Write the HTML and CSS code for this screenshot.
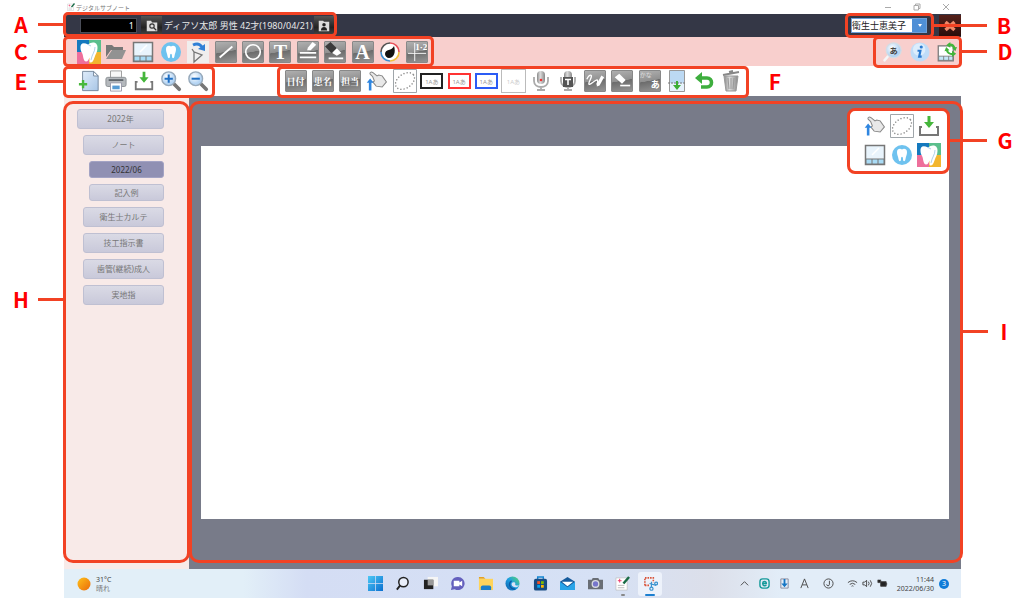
FILE: index.html
```
<!DOCTYPE html>
<html lang="ja">
<head>
    <meta charset="UTF-8">
    <meta name="viewport" content="width=device-width, initial-scale=1.0">
    <title>デジタルサブノート</title>
    <link rel="stylesheet" href="styles.css">
</head>
<body>
    <!-- アイコン定義 -->
    <svg class="defs" width="0" height="0" aria-hidden="true">
        <defs>
            <linearGradient id="gPaper" x1="0" y1="0" x2="1" y2="1"><stop offset="0" stop-color="#dfecfa"/><stop offset="1" stop-color="#a9c6e6"/></linearGradient>
            <linearGradient id="gGrey" x1="0" y1="0" x2="1" y2="0"><stop offset="0" stop-color="#888"/><stop offset=".4" stop-color="#ddd"/><stop offset="1" stop-color="#888"/></linearGradient>
            <linearGradient id="gWin" x1="0" y1="0" x2="1" y2="1"><stop offset="0" stop-color="#4cc8f5"/><stop offset="1" stop-color="#0a6fd0"/></linearGradient>
            <linearGradient id="gEdge" x1="0" y1="1" x2="1" y2="0"><stop offset="0" stop-color="#0c59a4"/><stop offset=".5" stop-color="#1b9de2"/><stop offset="1" stop-color="#5fd96b"/></linearGradient>
            <radialGradient id="gLens" cx=".4" cy=".35"><stop offset="0" stop-color="#fff"/><stop offset="1" stop-color="#b4d4f3"/></radialGradient>
            <linearGradient id="gSun" x1="0" y1="0" x2="1" y2="1"><stop offset="0" stop-color="#ffc21a"/><stop offset="1" stop-color="#ea6a0a"/></linearGradient>
        </defs>
        <symbol id="tooth4" viewBox="0 0 24 24">
            <path fill="#1479be" d="M0 0h12v12H0z"/><path fill="#5bbf8c" d="M12 0h12v12H12z"/><path fill="#ee6f9b" d="M0 12h12v12H0z"/><path fill="#f2b62f" d="M12 12h12v12H12z"/>
            <path fill="#fff" d="M3.500 8c-.5-5 3-6 7.500-3.500C15 1 21 2 20.500 8c0 4-2 6-3 9.500-1 3-2 5-4 5-1.500 0-1-2-1-5-1 2-1.500 4-3.500 4-2.500 0-2.500-4-3.500-7.500C4.500 11.500 3.500 11 3.500 8z"/>
            <path fill="none" stroke="#9bc4e2" stroke-width=".8" d="M11 4.500l3 1.500M18 7c0 5-3 7-4 13"/>
        </symbol>
        <symbol id="folder" viewBox="0 0 24 24">
            <path fill="#777" d="M2 5h6l2 2h9v3H7l-5 7z"/><path fill="#929292" d="M8 10h14l-4 9H2z"/>
        </symbol>
        <symbol id="layout" viewBox="0 0 24 24">
            <path fill="#e9f4fc" stroke="#777" stroke-width="1.500" d="M2.500 2.500h19v19h-19z"/>
            <path fill="#a9dbf5" stroke="#777" d="M3 16h18v5H3z"/><path stroke="#777" d="M9 16v5M15 16v5"/>
            <path stroke="#fff" stroke-width="1.500" d="M9 12l7-7"/>
        </symbol>
        <symbol id="toothRound" viewBox="0 0 24 24">
            <circle cx="12" cy="12" r="10" fill="#6ec2ef"/>
            <path fill="#fff" d="M7 9c0-3 3-4 5-2.500C14 5 17 6 17 9c0 3-1 4-1.500 7-.4 3-2.500 3-2.500 0 0-3-2-3-2 0 0 3-2 3-2.500 0C8 13 7 12 7 9z"/>
        </symbol>
        <symbol id="rotate" viewBox="0 0 24 24">
            <path fill="#f0eeee" d="M1 1h22v22H1z"/>
            <path fill="none" stroke="#777" stroke-width="1.300" d="M8 12v10l8-7zM8 12l-2-3"/>
            <path fill="none" stroke="#2f7fd6" stroke-width="3" d="M7 5c4-2 7-1 9 2"/><path fill="#2f7fd6" d="M12 9l7-5v7z"/>
        </symbol>
        <symbol id="line" viewBox="0 0 22 22"><path stroke="#fff" stroke-width="2" d="M4 17L18 5"/></symbol>
        <symbol id="circle" viewBox="0 0 22 22"><circle cx="11" cy="11" r="8" fill="none" stroke="#fff" stroke-width="1.800"/></symbol>
        <symbol id="pencilLines" viewBox="0 0 22 22">
            <path stroke="#fff" stroke-width="2" d="M2 12h18M2 17h18"/><path fill="#fff" d="M10 9l1-3 5-6 4 3-6 6z"/>
        </symbol>
        <symbol id="markerLines" viewBox="0 0 22 22">
            <path fill="#3a3a3a" d="M0 5l6-5 7 7-6 5z"/><path fill="#fff" d="M8 12l5-5 5 5-5 3zM4 17h16v2H4z"/>
        </symbol>
        <symbol id="palette" viewBox="0 0 24 24">
            <circle cx="12" cy="12" r="9" fill="#fff"/>
            <g fill="none" stroke-width="1.600"><path stroke="#e8505a" d="M12 3a9 9 0 0 1 9 9"/><path stroke="#f0c040" d="M21 12a9 9 0 0 1-9 9"/><path stroke="#3d8fd0" d="M12 21a9 9 0 0 1-9-9"/><path stroke="#555" d="M3 12a9 9 0 0 1 9-9"/></g>
            <path fill="#111" d="M7 14c0-5 7-3 9-8 2 6 0 12-5 12-2 0-4-2-4-4z"/>
        </symbol>
        <symbol id="grid12" viewBox="0 0 22 22"><path stroke="#fff" d="M8.500 1v20M1 12.500h20"/></symbol>
        <symbol id="newPage" viewBox="0 0 24 24">
            <path fill="url(#gPaper)" stroke="#71849a" d="M5 1.500h12l5 5v16H5z"/><path fill="#fff" stroke="#71849a" d="M17 1.500v5h5z"/>
            <path stroke="#48b83c" stroke-width="2.600" d="M1 15.500h9M5.500 11v9"/>
        </symbol>
        <symbol id="printer" viewBox="0 0 24 24">
            <path fill="#f7f7f7" stroke="#999" d="M6 1h12v9H6z"/><rect x="1" y="8" width="22" height="10" rx="2" fill="#b4b8bc" stroke="#8a8f93"/>
            <path fill="#60666c" d="M4 10h16v2H4z"/><path fill="#fff" stroke="#99a" d="M6 14h12v9H6z"/><path fill="#569bd4" d="M8 17h8v4H8z"/>
        </symbol>
        <symbol id="download" viewBox="0 0 24 24">
            <path fill="none" stroke="#777" stroke-width="2" d="M5 13H3v8h18v-8h-2"/><path fill="#45b63b" d="M10.500 2h3v6H17l-5 6-5-6h3.500z"/>
        </symbol>
        <symbol id="zoomIn" viewBox="0 0 24 24">
            <path stroke="#777" stroke-width="4" stroke-linecap="round" d="M15 15l6 6"/><circle cx="9.500" cy="9.500" r="7.500" fill="url(#gLens)" stroke="#97a9ba" stroke-width="1.500"/>
            <path stroke="#1f6fc4" stroke-width="2.200" d="M5 9.500h9M9.500 5v9"/>
        </symbol>
        <symbol id="zoomOut" viewBox="0 0 24 24">
            <path stroke="#777" stroke-width="4" stroke-linecap="round" d="M15 15l6 6"/><circle cx="9.500" cy="9.500" r="7.500" fill="url(#gLens)" stroke="#97a9ba" stroke-width="1.500"/>
            <path stroke="#1f6fc4" stroke-width="2.200" d="M5 9.500h9"/>
        </symbol>
        <symbol id="hand" viewBox="-2 -2 28 28">
            <path fill="#e8e8e8" stroke="#888" stroke-width="1.200" d="M7 7L4 4c-1-2 1-3 3-2l5 4 2-1 4 1 5 7-5 6-7-1-4-5 2-1z"/>
            <path fill="#2f86e0" d="M4 9l4 5H5.500v9h-3v-9H0z"/>
        </symbol>
        <symbol id="lasso" viewBox="0 0 24 24">
            <path fill="#fff" stroke="#a0a6aa" d="M.5.5h23v23H.5z"/>
            <ellipse cx="12" cy="12" rx="10.500" ry="7" transform="rotate(-35 12 12)" fill="none" stroke="#888" stroke-width="1.500" stroke-linecap="round" stroke-dasharray="0 3.200"/>
        </symbol>
        <symbol id="mic" viewBox="0 0 24 24">
            <rect x="8" y="2" width="8" height="13" rx="4" fill="url(#gGrey)"/><path fill="none" stroke="#aaa" stroke-width="1.800" d="M5 8v4c0 8 14 8 14 0V8M12 18v3M8 21h8"/>
            <circle cx="12" cy="11" r="1.300" fill="#e33"/>
        </symbol>
        <symbol id="micT" viewBox="0 0 24 24">
            <rect x="8" y="2" width="8" height="13" rx="4" fill="url(#gGrey)"/><path fill="none" stroke="#aaa" stroke-width="1.800" d="M5 8v4c0 8 14 8 14 0V8M12 18v3M8 21h8"/>
            <path fill="#555" d="M7 8h10v10H7z"/><path stroke="#fff" stroke-width="1.600" d="M9 10.500h6M12 10v6"/>
        </symbol>
        <symbol id="pen" viewBox="0 0 22 22">
            <path fill="none" stroke="#fff" stroke-width="1.500" d="M2 9c3-6 7-6 4 0s-2 7 2 4 6-4 6-2 0 2-1 4"/><path fill="#fff" d="M13 14l5-9 3 2-5 9-3 1z"/>
        </symbol>
        <symbol id="eraser" viewBox="0 0 22 22"><path fill="#fff" d="M3 7l5-4 7 7-4 4z"/><path stroke="#fff" stroke-width="1.800" d="M9 16h11"/></symbol>
        <symbol id="insertPage" viewBox="0 0 24 24">
            <path fill="#bcd9f3" stroke="#999" d="M4.500 1.500h15v21h-15z"/><path fill="#e6f2fc" d="M5 14h14v8H5z"/><path stroke="#777" stroke-dasharray="2 1" d="M3 14h18"/><path fill="#3eae36" d="M11 12h2v4h3l-4 5-4-5h3z"/>
        </symbol>
        <symbol id="undo" viewBox="0 0 24 24">
            <path fill="none" stroke="#3eae3e" stroke-width="3.600" d="M8 9h7c6 0 6 9 0 9H9"/><path fill="#3eae3e" d="M10 3v12L3 9z"/>
        </symbol>
        <symbol id="trash" viewBox="0 0 24 24">
            <path fill="url(#gGrey)" stroke="#999" d="M5 7h14l-2 15H7z"/><path stroke="#888" stroke-width="2" d="M4 6l16-3M10 3l4-1"/><path stroke="#999" d="M9 9l1 11M12 9v11M15 9l-1 11"/>
        </symbol>
        <symbol id="info" viewBox="0 0 24 24">
            <circle cx="12" cy="12" r="11.500" fill="#bfdcf8"/><circle cx="11" cy="9" r="7.500" fill="#dcedfc"/>
            <path fill="none" stroke="#2979d0" stroke-width="2.600" d="M9 10.500h3.500L11 17.500h3"/><circle cx="13.500" cy="6" r="1.900" fill="#2979d0"/>
        </symbol>
        <symbol id="refreshLayout" viewBox="0 0 24 24">
            <path fill="#fff" stroke="#777" stroke-width="1.500" d="M1.500 4.500h18v18h-18z"/><path fill="#c4e6f7" stroke="#777" d="M2 17h17v5H2zM8 17v5M14 17v5"/>
            <path fill="none" stroke="#43b53b" stroke-width="2.600" d="M14 3.500c4-1 6 1 7 4M19 14.500c-4 0-7-2-7-5"/><path fill="#43b53b" d="M11 4l5-4v7zM23 14l-5-3.500V18zM24 6l-6 1 4 4zM9 11l6-1-4-4z"/>
        </symbol>
        <symbol id="sheet" viewBox="0 0 16 16">
            <path fill="#fff" stroke="#bbb" stroke-width=".7" d="M1 2h12v13H1z"/><path stroke="#e36" d="M5 3v4M3 5h4"/><path stroke="#bbb" d="M3 10h7M3 12.500h7"/><path stroke="#186b45" stroke-width="2.600" d="M9 8l6-7"/>
        </symbol>
    </svg>

    <div class="app">
        <div class="titlebar">
            <svg class="title-icon"><use href="#sheet"/></svg>
            <span>デジタルサブノート</span>
            <div class="window-buttons">
                <button aria-label="最小化"><svg viewBox="0 0 8 8"><path d="M1 4.500h6"/></svg></button>
                <button aria-label="元に戻す"><svg viewBox="0 0 8 8"><path d="M1 2.500h4.500V7H1zM2.500 2.500V1H7v4.500H5.500"/></svg></button>
                <button aria-label="閉じる"><svg viewBox="0 0 8 8"><path d="M1 1l6 6M7 1L1 7"/></svg></button>
            </div>
        </div>

        <header class="patient-bar">
            <input class="patient-no" type="text" value="1" aria-label="患者番号">
            <button class="dark-btn" aria-label="患者検索"><svg viewBox="0 0 16 16"><path fill="#ddd" d="M2 2h5l1 2h6v10H2z"/><circle cx="8" cy="8" r="2.500" fill="#ddd" stroke="#333" stroke-width="1.300"/><path stroke="#333" stroke-width="1.500" d="M10 10l3 3"/></svg></button>
            <span class="patient-name">ディアソ太郎 男性 42才(1980/04/21)</span>
            <button class="dark-btn" aria-label="患者情報"><svg viewBox="0 0 16 16"><path fill="#ddd" d="M2 2h5l1 1h6v11H2z"/><circle cx="8" cy="6.500" r="2" fill="#222"/><path fill="#222" d="M4.500 13c0-5 7-5 7 0z"/></svg></button>
            <div class="staff">
                <select aria-label="担当者"><option>衛生士恵美子</option></select>
            </div>
            <button class="exit-btn" aria-label="終了"><svg viewBox="0 0 12 12"><path stroke="#f08868" stroke-width="3.500" d="M1.500 2l9 8M10.500 2l-9 8"/></svg></button>
        </header>

        <div class="toolbar pink">
            <div class="tools main-tools">
                <button aria-label="歯"><svg><use href="#tooth4"/></svg></button>
                <button aria-label="開く"><svg><use href="#folder"/></svg></button>
                <button aria-label="レイアウト"><svg><use href="#layout"/></svg></button>
                <button aria-label="歯式"><svg><use href="#toothRound"/></svg></button>
                <button aria-label="回転"><svg><use href="#rotate"/></svg></button>
                <button aria-label="直線"><svg class="tile"><use href="#line"/></svg></button>
                <button aria-label="円"><svg class="tile"><use href="#circle"/></svg></button>
                <button><span class="tile letter">T</span></button>
                <button aria-label="線種"><svg class="tile"><use href="#pencilLines"/></svg></button>
                <button aria-label="マーカー"><svg class="tile"><use href="#markerLines"/></svg></button>
                <button><span class="tile letter">A</span></button>
                <button aria-label="色"><svg><use href="#palette"/></svg></button>
                <button aria-label="番号"><span class="tile number"><svg><use href="#grid12"/></svg><b>1·2</b></span></button>
            </div>
            <div class="tools side-tools">
                <button class="find-text" aria-label="文字検索"><svg viewBox="0 0 24 24"><path stroke="#f4f6f8" stroke-width="3" stroke-linecap="round" d="M9 15l-6 7"/><circle cx="14" cy="10" r="9" fill="url(#gLens)" stroke="#d5dde4" stroke-width="1.500"/><text x="9" y="14" font-size="10">あ</text></svg></button>
                <button aria-label="情報"><svg><use href="#info"/></svg></button>
                <button aria-label="更新"><svg><use href="#refreshLayout"/></svg></button>
            </div>
        </div>

        <div class="toolbar">
            <div class="tools page-tools">
                <button aria-label="新規"><svg><use href="#newPage"/></svg></button>
                <button aria-label="印刷"><svg><use href="#printer"/></svg></button>
                <button aria-label="保存"><svg><use href="#download"/></svg></button>
                <button aria-label="拡大"><svg><use href="#zoomIn"/></svg></button>
                <button aria-label="縮小"><svg><use href="#zoomOut"/></svg></button>
            </div>
            <div class="tools edit-tools">
                <button><span class="tile word">日付</span></button>
                <button><span class="tile word">患名</span></button>
                <button><span class="tile word">担当</span></button>
                <button aria-label="移動"><svg><use href="#hand"/></svg></button>
                <button aria-label="範囲選択"><svg><use href="#lasso"/></svg></button>
                <button><span class="frame black">1Aあ</span></button>
                <button><span class="frame red">1Aあ</span></button>
                <button><span class="frame blue">1Aあ</span></button>
                <button><span class="frame plain">1Aあ</span></button>
                <button aria-label="録音"><svg><use href="#mic"/></svg></button>
                <button aria-label="音声入力"><svg><use href="#micT"/></svg></button>
                <button aria-label="ペン"><svg class="tile"><use href="#pen"/></svg></button>
                <button aria-label="消しゴム"><svg class="tile"><use href="#eraser"/></svg></button>
                <button><span class="tile kana"><i>かな</i><b>あ</b></span></button>
                <button aria-label="ページ挿入"><svg><use href="#insertPage"/></svg></button>
                <button aria-label="元に戻す"><svg><use href="#undo"/></svg></button>
                <button aria-label="削除"><svg><use href="#trash"/></svg></button>
            </div>
        </div>

        <main class="workspace">
            <nav class="note-list">
                <button>2022年</button>
                <button class="level2">ノート</button>
                <button class="level3 active">2022/06</button>
                <button class="level3">記入例</button>
                <button class="level2">衛生士カルテ</button>
                <button class="level2">技工指示書</button>
                <button class="level2">歯管(継続)成人</button>
                <button class="level2">実地指</button>
            </nav>
            <div class="canvas-area">
                <div class="paper"></div>
                <div class="palette">
                    <button aria-label="移動"><svg><use href="#hand"/></svg></button>
                    <button aria-label="範囲選択"><svg><use href="#lasso"/></svg></button>
                    <button aria-label="保存"><svg><use href="#download"/></svg></button>
                    <button aria-label="レイアウト"><svg><use href="#layout"/></svg></button>
                    <button aria-label="歯式"><svg><use href="#toothRound"/></svg></button>
                    <button aria-label="歯"><svg><use href="#tooth4"/></svg></button>
                </div>
            </div>
        </main>

        <footer class="taskbar">
            <div class="weather">
                <svg viewBox="0 0 14 14"><circle cx="7" cy="7" r="6.500" fill="url(#gSun)"/></svg>
                <div>31°C<br><span>晴れ</span></div>
            </div>
            <div class="task-icons">
                <button aria-label="スタート"><svg viewBox="0 0 16 16"><path fill="url(#gWin)" d="M0 0h7.600v7.600H0zM8.400 0H16v7.600H8.400zM0 8.400h7.600V16H0zM8.400 8.400H16V16H8.400z"/></svg></button>
                <button aria-label="検索"><svg viewBox="0 0 16 16"><circle cx="9" cy="6.500" r="5" fill="#e9eefa" stroke="#222" stroke-width="1.600"/><path stroke="#222" stroke-width="2" d="M5.500 10L2 14.500"/></svg></button>
                <button aria-label="タスクビュー"><svg viewBox="0 0 16 16"><path fill="#f5f5f5" d="M5 1h11v10H5z"/><path fill="#222" d="M1 4h10v10H1z"/><path fill="#999" d="M5 4h6v6H5z"/></svg></button>
                <button aria-label="チャット"><svg viewBox="0 0 16 16"><path fill="#6460bd" d="M8 1a7 7 0 1 1-3 13l-4 1 1-4A7 7 0 0 1 8 1z"/><path fill="#fff" d="M4 5h6v6H4zM10 7l3-2v6l-3-2z"/></svg></button>
                <button aria-label="エクスプローラー"><svg viewBox="0 0 16 16"><path fill="#e5a220" d="M1 1h5l2 2H1z"/><path fill="#ffd45a" d="M1 3h15v12H1z"/><path fill="#1c7fc8" d="M3 15v-3q0-2 2-2h7q2 0 2 2v3z"/></svg></button>
                <button aria-label="Edge"><svg viewBox="0 0 16 16"><circle cx="8" cy="8" r="7.500" fill="url(#gEdge)"/><path fill="#d9e2f6" d="M8 7c-2 1-1 5 3 5 2 0 3-1 4-2-1 0-5 1-4-2 0-1-1-2-3-1z"/><path fill="none" stroke="#0c59a4" stroke-width="1.500" d="M7 5c-4 3-2 9 4 9"/></svg></button>
                <button aria-label="ストア"><svg viewBox="0 0 16 16"><path fill="none" stroke="#1585d0" stroke-width="1.500" d="M5 4V1h6v3"/><rect x="1" y="3" width="14" height="12.500" rx="2" fill="#174b82"/><path fill="#f25022" d="M4.500 5.500h3v3h-3z"/><path fill="#7fba00" d="M8.500 5.500h3v3h-3z"/><path fill="#00a4ef" d="M4.500 9.500h3v3h-3z"/><path fill="#ffb900" d="M8.500 9.500h3v3h-3z"/></svg></button>
                <button aria-label="メール"><svg viewBox="0 0 16 16"><path fill="#155a9c" d="M0 6l8-5 8 5v9H0z"/><path fill="#fff" d="M2 6h12l-6 5z"/><path fill="#29a4e8" d="M0 6l8 6 8-6v9H0z"/></svg></button>
                <button aria-label="カメラ"><svg viewBox="0 0 16 16"><path fill="#696e75" d="M0 4h4l1-2h6l1 2h4v10H0z"/><circle cx="8" cy="8.500" r="4.200" fill="#d9dce2"/><circle cx="8" cy="8.500" r="2.800" fill="#7776cc"/></svg></button>
                <button class="running" aria-label="サブノート"><svg><use href="#sheet"/></svg></button>
                <button class="current" aria-label="Snipping Tool"><svg viewBox="0 0 16 16"><path fill="none" stroke="#d8543a" stroke-width="1.700" stroke-dasharray="1.700 1" d="M2 10V2h9v5M2 10h5"/><path stroke="#3b93cf" stroke-width="1.300" d="M7 8l7 2M9 6v6"/><g fill="none" stroke="#3b93cf" stroke-width="1.300"><circle cx="9" cy="13.500" r="1.700"/><circle cx="14" cy="8" r="1.500"/></g></svg></button>
            </div>
            <div class="tray">
                <svg viewBox="0 0 12 12"><path d="M2 8l4-4 4 4"/></svg>
                <svg viewBox="0 0 12 12"><rect class="teal" x="1" y="1" width="10" height="10" rx="3"/><path class="teal" d="M4 6h4c0-3-4-3-4 0s3 3 4 1.500"/></svg>
                <svg viewBox="0 0 12 12"><path stroke="#889" d="M2 1h8v10H2z"/><path fill="#1676c4" stroke="none" d="M5 1h2v5h2.500L6 10 2.500 6H5z"/></svg>
                <svg viewBox="0 0 12 12"><path d="M2 11L6 1l4 10M3.500 7.500h5"/></svg>
                <svg class="ime" viewBox="0 0 12 12"><circle cx="6" cy="6" r="5"/><path d="M7 3v4c0 2-3 2-3 0"/></svg>
                <div class="status">
                    <svg viewBox="0 0 12 12"><path d="M1 5q5-4 10 0M3 7q3-2.500 6 0M5 9q1-1 2 0"/></svg>
                    <svg viewBox="0 0 12 12"><path d="M1 4.500h2l2-2v7l-2-2H1zM7 4q1.500 2 0 4M9 2.500q3 3.500 0 7"/></svg>
                    <svg viewBox="0 0 12 12"><path fill="#222" d="M4 4h6v5H4zM1 2v3h3V2M10.500 5.500v2"/></svg>
                </div>
                <div class="clock">11:44<br>2022/06/30</div>
                <span class="badge">3</span>
            </div>
        </footer>

        <!-- 各部の説明用の枠 -->
        <div class="callouts">
            <div class="callout left a"><b>A</b></div>
            <div class="callout right b"><b>B</b></div>
            <div class="callout left c"><b>C</b></div>
            <div class="callout right d"><b>D</b></div>
            <div class="callout left e"><b>E</b></div>
            <div class="callout right f"><b>F</b></div>
            <div class="callout right i"><b>I</b></div>
            <div class="callout left h"><b>H</b></div>
            <div class="callout right g"><b>G</b></div>
        </div>
    </div>
</body>
</html>
```
FILE: styles.css
```
* {
    box-sizing: border-box;
}
body {
    margin: 0;
    padding: 0 63px 0 64px;
    background-color: #fff;
    font-family: "Noto Sans", "Noto Sans CJK JP", sans-serif;
    font-size: 9px;
    overflow: hidden;
}
button {
    margin: 0;
    padding: 0;
    border: none;
    background: none;
    font-family: inherit;
    cursor: pointer;
}
svg {
    display: block;
}
.defs {
    position: absolute;
}
.app {
    position: relative;
    display: flex;
    flex-direction: column;
    height: 100vh;
}

/* タイトルバー */
.titlebar {
    display: flex;
    align-items: center;
    gap: 1px;
    height: 14px;
    padding-left: 3px;
    color: #777;
    font-size: 6px;
}
.title-icon {
    width: 8px;
    height: 8px;
}
.window-buttons {
    display: flex;
    gap: 21px;
    margin-left: auto;
    padding-right: 11px;
}
.window-buttons svg {
    width: 8px;
    height: 8px;
    fill: none;
    stroke: #aaa;
}

/* 患者バー */
.patient-bar {
    display: flex;
    align-items: center;
    height: 23px;
    padding-left: 16px;
    background-color: #343746;
    color: #e8e8e8;
}
.patient-no {
    width: 57px;
    height: 15px;
    margin-right: 4px;
    padding: 0 2px;
    border: 1px solid #4a4d58;
    background-color: #000;
    color: #fff;
    font-family: inherit;
    font-size: 9px;
    text-align: right;
}
.dark-btn {
    display: flex;
    align-items: center;
    justify-content: center;
    width: 21px;
    height: 19px;
    background: linear-gradient(#555, #222 60%, #444);
}
.dark-btn svg {
    width: 14px;
    height: 14px;
}
.patient-name {
    padding: 0 1px 0 2px;
    white-space: nowrap;
}
.staff {
    position: relative;
    width: 76px;
    height: 15px;
    margin-left: auto;
    background: linear-gradient(90deg, #fff 61px, #4f8fd6 61px);
}
.staff select {
    width: 100%;
    height: 100%;
    padding: 0 14px 0 0;
    border: 1px solid #6e9fd8;
    background: none;
    color: #222;
    font-family: inherit;
    font-size: 9px;
    appearance: none;
}
.staff::after {
    content: "";
    position: absolute;
    top: 6px;
    right: 5px;
    border: 2px solid transparent;
    border-top: 3px solid #fff;
}
.exit-btn {
    display: flex;
    align-items: center;
    justify-content: center;
    width: 22px;
    height: 21px;
    margin-left: 12px;
    background: linear-gradient(#55211b, #2a0d0a);
}
.exit-btn svg {
    width: 12px;
    height: 12px;
}

/* ツールバー */
.toolbar {
    display: flex;
    align-items: center;
    height: 30px;
}
.toolbar.pink {
    height: 29px;
    background-color: #f8cfcd;
}
.tools {
    display: flex;
}
.tools button {
    display: flex;
    flex: 1;
    align-items: center;
    justify-content: center;
    height: 26px;
}
.tools svg,
.palette svg {
    width: 24px;
    height: 24px;
}
.main-tools {
    width: 356px;
    margin-left: 11px;
}
.side-tools {
    width: 83px;
    margin-left: auto;
}
.side-tools svg {
    width: 20px;
    height: 20px;
}
.find-text text {
    fill: #444;
    font-weight: bold;
}
.page-tools {
    width: 137px;
    margin-left: 11px;
}
.page-tools svg {
    width: 22px;
    height: 22px;
}
.edit-tools {
    width: 463px;
    margin-left: 70px;
}
.tools .tile {
    display: flex;
    align-items: center;
    justify-content: center;
    width: 22px;
    height: 22px;
    border: 1px solid #888;
    border-radius: 1px;
    background: linear-gradient(170deg, #b0b0b0, #909090 48%, #6c6c6c 50%, #949494);
    color: #fff;
    overflow: hidden;
}
.letter {
    font-family: "Liberation Serif", serif;
    font-size: 20px;
    font-weight: bold;
    line-height: 20px;
}
.word {
    font-family: "Liberation Serif", "Noto Serif CJK JP", "Noto Sans CJK JP", serif;
    font-size: 9px;
    font-weight: bold;
    white-space: nowrap;
}
.number {
    position: relative;
}
.number b {
    position: absolute;
    top: 0;
    right: 0;
    font-family: "Liberation Serif", serif;
    font-size: 9px;
    line-height: 10px;
}
.tools .kana {
    flex-direction: column;
}
.kana i {
    align-self: flex-start;
    color: #ddd;
    font-size: 6px;
    font-style: normal;
    line-height: 8px;
}
.kana b {
    align-self: flex-end;
    font-size: 9px;
    line-height: 12px;
}
.frame {
    display: flex;
    align-items: center;
    justify-content: center;
    width: 23px;
    height: 16px;
    border: 2px solid #222;
    background-color: #fff;
    color: #999;
    font-size: 6px;
}
.frame.red {
    border-color: #f33;
}
.frame.blue {
    border-color: #2b5cf5;
}
.frame.plain {
    width: 25px;
    height: 24px;
    border: 1px solid #bbb;
    color: #ccc;
}

/* 作業エリア */
.workspace {
    display: flex;
    flex: 1;
    min-height: 0;
}
.note-list {
    display: flex;
    flex-direction: column;
    gap: 6px;
    width: 125px;
    padding: 13px 25px 0 13px;
    background-color: #f8eae8;
}
.note-list button {
    height: 20px;
    border: 1px solid #bfc0d2;
    border-radius: 3px;
    background: linear-gradient(#dadae5, #c9c9da);
    color: #777;
    font-size: 8px;
    line-height: 16px;
}
.note-list .level2 {
    margin-left: 6px;
}
.note-list .level3 {
    height: 17px;
    margin-left: 12px;
    line-height: 14px;
}
.note-list .active {
    border-color: #a3a3c4;
    background: #9090b3;
    color: #333;
}
.canvas-area {
    position: relative;
    flex: 1;
    padding: 50px 12px;
    background-color: #787b89;
}
.paper {
    height: 100%;
    background-color: #fff;
}
.palette {
    position: absolute;
    top: 13px;
    right: 12px;
    display: grid;
    grid-template-columns: repeat(3, 1fr);
    gap: 4px 2px;
    width: 101px;
    padding: 5px 8px 5px 14px;
    border-radius: 6px;
    background-color: #fff;
}
.palette button {
    display: flex;
    justify-content: center;
    height: 25px;
}

/* タスクバー */
.taskbar {
    display: grid;
    grid-template-columns: 1fr auto 1fr;
    align-items: center;
    height: 29px;
    background: linear-gradient(90deg, #e2eff8 0%, #e2eff8 20%, #d4ddf4 27%, #d6e1f5 60%, #dcdfea 72%, #e2edf8 80%);
    color: #444;
    font-size: 7px;
    line-height: 9px;
}
.weather {
    display: flex;
    align-items: center;
    gap: 5px;
    padding-left: 13px;
}
.weather svg {
    width: 14px;
    height: 14px;
}
.weather span {
    color: #777;
}
.task-icons {
    display: flex;
    justify-content: space-between;
    width: 299px;
}
.task-icons button {
    position: relative;
    display: flex;
    align-items: center;
    justify-content: center;
    width: 24px;
    height: 24px;
    border-radius: 3px;
}
.task-icons svg {
    width: 15px;
    height: 15px;
}
.task-icons .current {
    background-color: #edf2fb;
}
.running::after,
.current::after {
    content: "";
    position: absolute;
    bottom: 0;
    width: 4px;
    height: 2px;
    border-radius: 1px;
    background-color: #888;
}
.current::after {
    width: 10px;
    background-color: #1c7fd0;
}
.tray {
    display: flex;
    align-items: center;
    justify-content: flex-end;
    gap: 9px;
    padding-right: 12px;
}
.tray svg {
    width: 11px;
    height: 11px;
    fill: none;
    stroke: #444;
}
.tray .teal {
    stroke: #169a9a;
    stroke-width: 1.5;
}
.tray .ime {
    margin-left: 4px;
}
.status {
    display: flex;
    gap: 4px;
    margin-left: 4px;
}
.clock {
    text-align: right;
}
.badge {
    width: 10px;
    height: 10px;
    margin-left: -4px;
    border-radius: 50%;
    background-color: #0f7bd8;
    color: #fff;
    line-height: 10px;
    text-align: center;
}

/* 説明用の枠と引き出し線 */
.callouts {
    position: absolute;
    inset: 0;
    pointer-events: none;
}
.callout {
    position: absolute;
    border: 3px solid #f24224;
    border-radius: 5px;
}
.callout::before {
    content: "";
    position: absolute;
    top: 50%;
    width: 28px;
    height: 3px;
    margin-top: -2px;
    background-color: #f24224;
}
.callout b {
    position: absolute;
    top: 50%;
    width: 20px;
    margin-top: -16px;
    color: #f00;
    font-family: "Noto Sans CJK JP", sans-serif;
    font-size: 21px;
    line-height: 30px;
    text-align: center;
}
.left::before {
    right: 100%;
}
.left b {
    right: 100%;
    margin-right: 35px;
}
.right::before {
    left: 100%;
}
.right b {
    right: -56px;
}
.a {
    top: 12px;
    left: -1px;
    width: 274px;
    height: 25px;
}
.b {
    top: 13px;
    right: 27px;
    width: 89px;
    height: 25px;
}
.b::before {
    width: 56px;
}
.right.b b {
    right: -83px;
}
.c {
    top: 36px;
    left: -1px;
    width: 371px;
    height: 31px;
}
.d {
    top: 36px;
    right: -1px;
    width: 89px;
    height: 32px;
}
.e {
    top: 66px;
    left: -1px;
    width: 152px;
    height: 32px;
}
.f {
    top: 66px;
    left: 213px;
    width: 472px;
    height: 32px;
}
.f::before {
    display: none;
}
.right.f b {
    right: -39px;
}
.g {
    top: 108px;
    right: 11px;
    width: 103px;
    height: 66px;
    border-radius: 8px;
}
.g::before {
    width: 40px;
}
.right.g b {
    right: -68px;
}
.h,
.i {
    top: 101px;
    bottom: 35px;
    border-radius: 10px;
}
.h {
    left: -1px;
    width: 127px;
}
.callout.h::before,
.callout.h b {
    top: 196px;
}
.i {
    left: 125px;
    right: -2px;
}
.right.i b {
    right: -54px;
}
```
